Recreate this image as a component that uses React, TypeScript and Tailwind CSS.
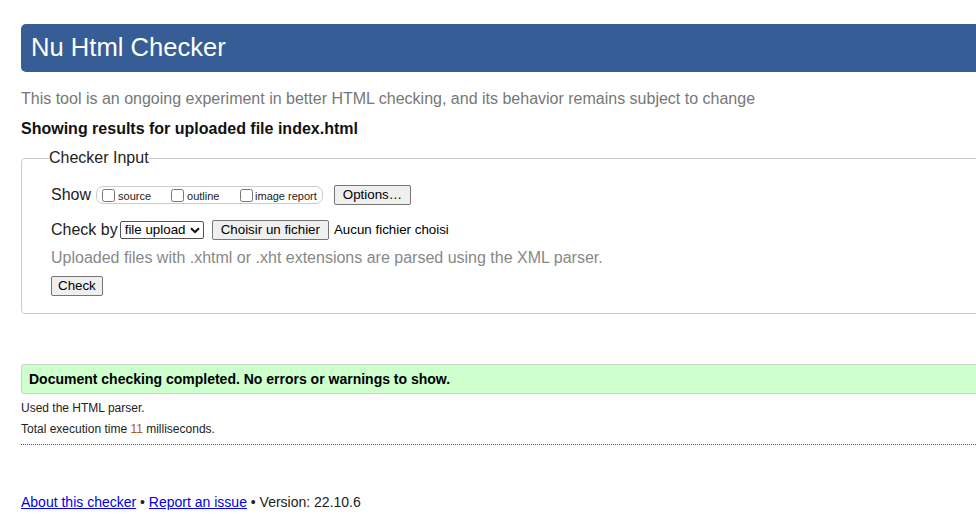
import React from 'react';

const btn =
  "h-[20px] px-[6px] bg-[#efefef] border border-[#767676] rounded-[2px] text-[13.33px] leading-none text-black flex items-center";

const App: React.FC = () => {
  return (
    <div className="min-h-[525px] bg-white overflow-hidden font-['Liberation_Sans',Arial,sans-serif] text-[#222]">
      <div className="pt-[24px] pl-[21px] mr-[-40px]">
        {/* Title bar */}
        <div className="h-[48px] bg-[#365d95] rounded-[5px] flex items-center pl-[10px]">
          <h1 className="text-white text-[25.6px] leading-none">Nu Html Checker</h1>
        </div>

        <p className="mt-[17px] text-[16px] leading-[20px] text-[#777]">
          This tool is an ongoing experiment in better HTML checking, and its behavior remains subject to change
        </p>
        <p className="mt-[10px] text-[16px] leading-[20px] font-bold text-[#111]">
          Showing results for uploaded file index.html
        </p>

        {/* Checker input */}
        <fieldset className="mt-[9px] border border-[#ccc] rounded-[4px] pl-[27px] pb-[17px]">
          <legend className="text-[16px] leading-[20px] text-[#222]">Checker Input</legend>
          <div className="ml-[2px]">
            <div className="mt-[16px] h-[22px] flex items-center">
              <span className="text-[16px]">Show</span>
              <div className="ml-[5px] h-[18px] border border-[#ccc] rounded-[7px] flex items-center pl-[5px] pr-[5px] text-[11px] text-[#222]">
                <label className="w-[69px] flex items-center">
                  <input type="checkbox" className="w-[13px] h-[13px] m-0" />
                  <span className="ml-[3px] mt-[3px]">source</span>
                </label>
                <label className="w-[69px] flex items-center">
                  <input type="checkbox" className="w-[13px] h-[13px] m-0" />
                  <span className="ml-[3px] mt-[3px]">outline</span>
                </label>
                <label className="flex items-center">
                  <input type="checkbox" className="w-[13px] h-[13px] m-0" />
                  <span className="ml-[2px] mt-[3px]">image report</span>
                </label>
              </div>
              <button className={`${btn} ml-[11px] px-[8px]`}>Options…</button>
            </div>

            <div className="mt-[13px] h-[22px] flex items-center">
              <span className="text-[16px]">Check by</span>
              <div className="ml-[2px] h-[18px] w-[84px] border border-[#555] rounded-[2px] bg-white flex items-center justify-between pl-[4px] pr-[3px] text-[13.33px] text-black">
                <span>file upload</span>
                <svg width="10" height="7" viewBox="0 0 10 7" className="mt-[1px]">
                  <path d="M1 1.2 L5 5 L9 1.2" fill="none" stroke="#111" strokeWidth="2" />
                </svg>
              </div>
              <button className={`${btn} ml-[8px] px-[8px]`}>Choisir un fichier</button>
              <span className="ml-[5px] text-[13.33px] text-black">Aucun fichier choisi</span>
            </div>

            <p className="mt-[7px] text-[16px] leading-[20px] text-[#888]">
              Uploaded files with .xhtml or .xht extensions are parsed using the XML parser.
            </p>

            <button className={`${btn} mt-[8px] px-[6px]`}>Check</button>
          </div>
        </fieldset>

        {/* Result */}
        <div className="mt-[50px] h-[30px] bg-[#ccffcc] border border-[#c8d8c8] rounded-[3px] flex items-center pl-[7px]">
          <span className="text-[14px] font-bold text-black">Document checking completed. No errors or warnings to show.</span>
        </div>

        <p className="mt-[4px] text-[12px] leading-[20px] text-[#222]">Used the HTML parser.</p>
        <p className="mt-[1px] text-[12px] leading-[20px] text-[#222]">
          Total execution time <span className="text-[#b05a10]">11</span> milliseconds.
        </p>
        <div className="mt-[5px] border-t border-dotted border-[#555]" />

        {/* Footer */}
        <p className="mt-[47px] text-[14px] leading-[20px] text-[#222]">
          <a href="#" className="text-[#0000ee] underline">About this checker</a>
          {' • '}
          <a href="#" className="text-[#0000ee] underline">Report an issue</a>
          {' • Version: 22.10.6'}
        </p>
      </div>
    </div>
  );
};

export default App;
